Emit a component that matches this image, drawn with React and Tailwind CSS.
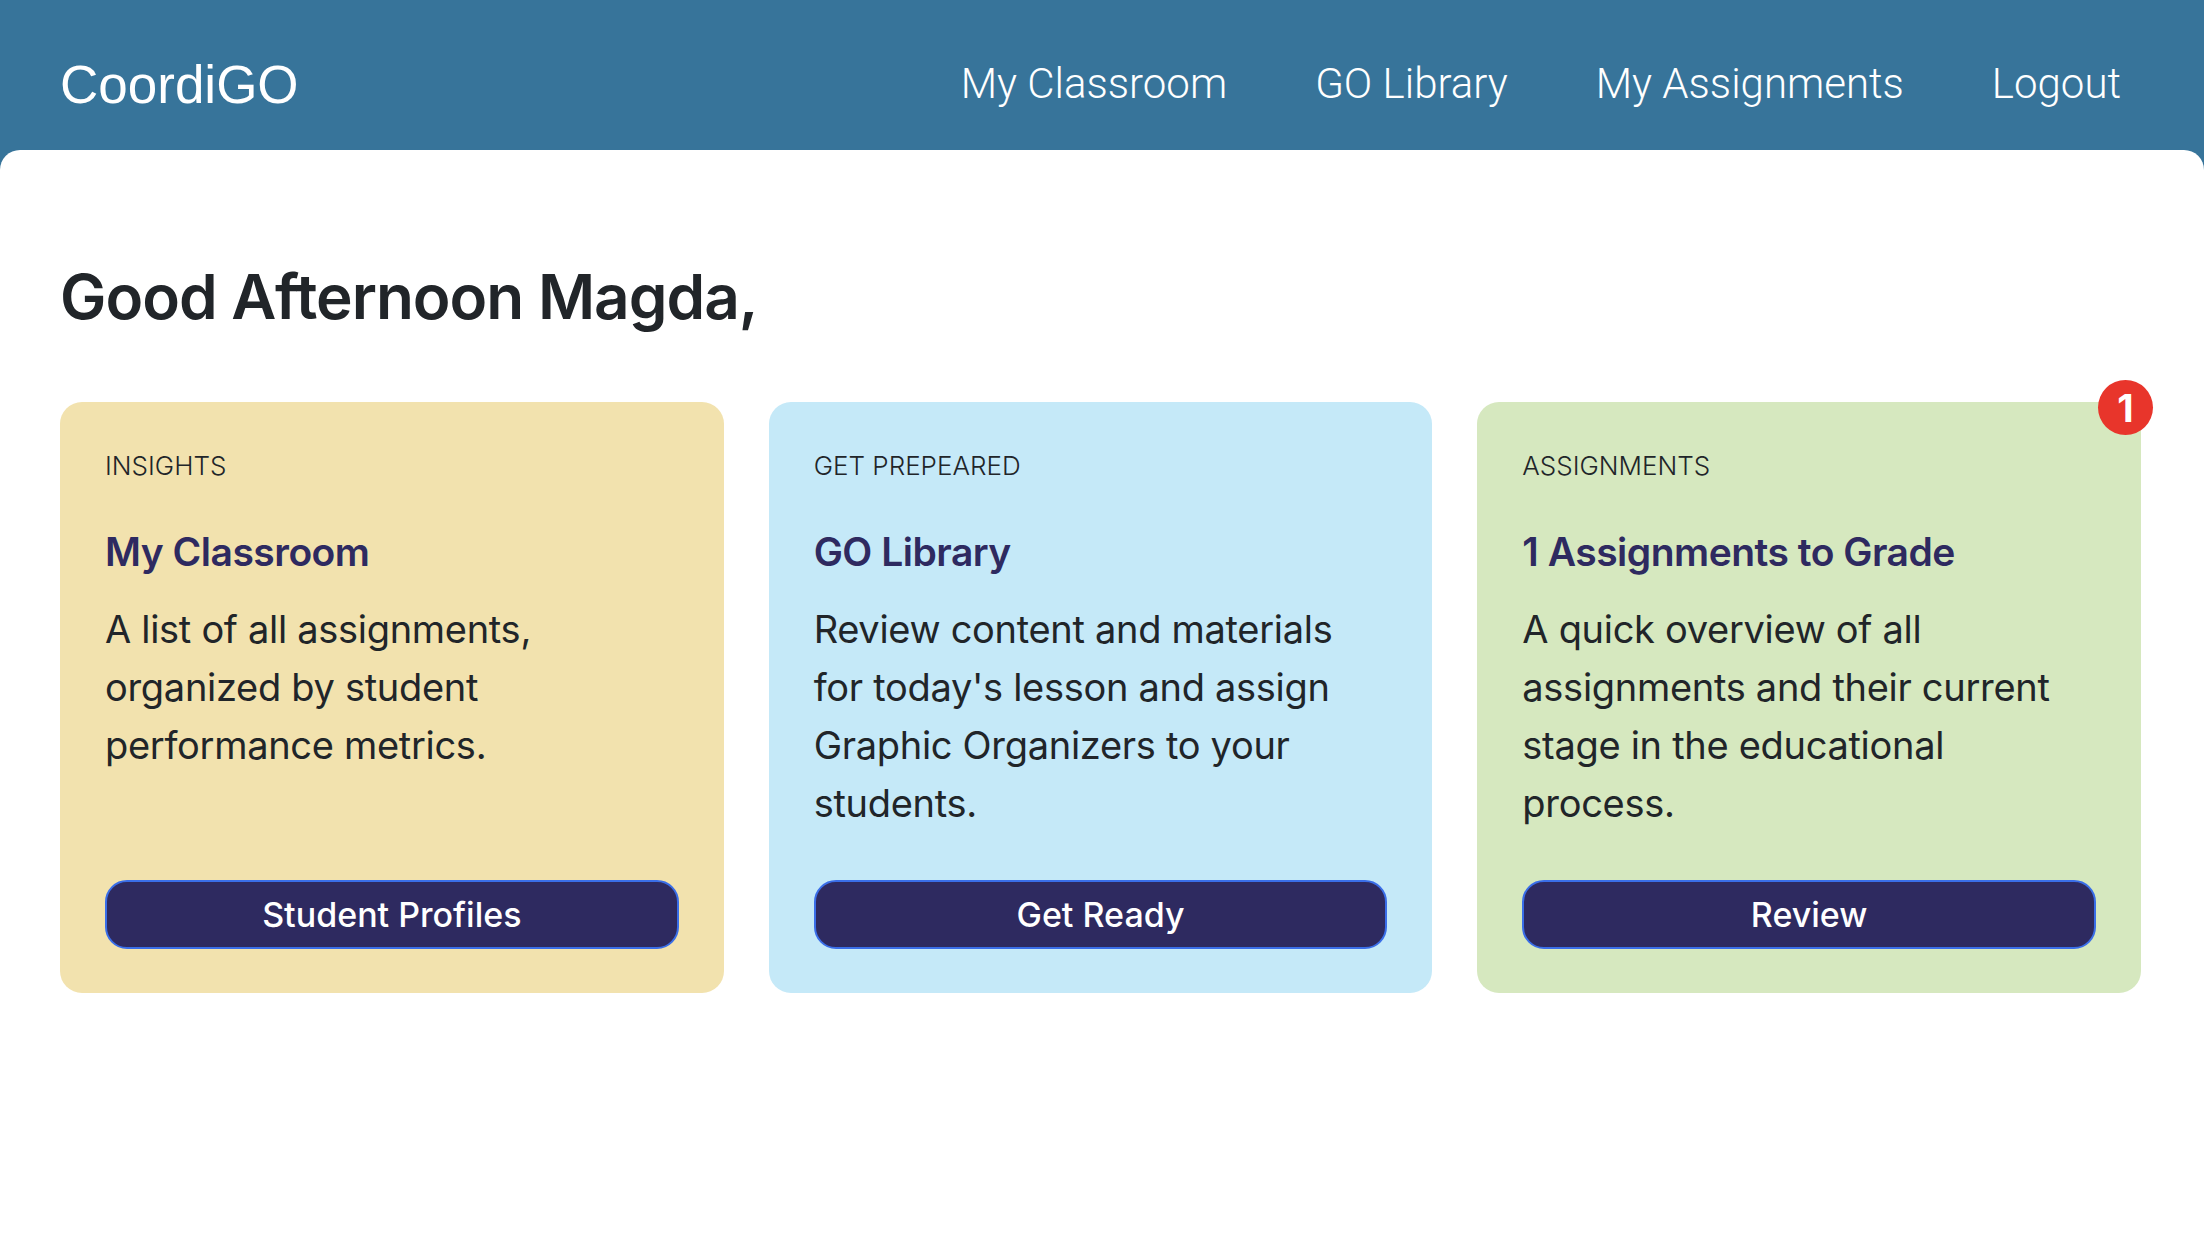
import React from "react";

const cards = [
  {
    label: "INSIGHTS",
    title: "My Classroom",
    text: "A list of all assignments, organized by student performance metrics.",
    button: "Student Profiles",
    bg: "bg-[#f2e2ae]",
  },
  {
    label: "GET PREPEARED",
    title: "GO Library",
    text: "Review content and materials for today's lesson and assign Graphic Organizers to your students.",
    button: "Get Ready",
    bg: "bg-[#c5e9f8]",
  },
  {
    label: "ASSIGNMENTS",
    title: "1 Assignments to Grade",
    text: "A quick overview of all assignments and their current stage in the educational process.",
    button: "Review",
    bg: "bg-[#d6e8bf]",
    badge: "1",
  },
];

export default function App() {
  return (
    <div className="min-h-screen bg-[#37749a] flex flex-col">
      <header className="h-[150px] shrink-0 flex items-center justify-between pl-[60px] pr-[83px] pt-[18px]">
        <div className="text-white text-[53px] leading-none font-['Liberation_Sans',Arial,sans-serif]">
          CoordiGO
        </div>
        <nav className="flex items-center gap-[88px] text-white text-[42px] leading-none font-light font-['Roboto',sans-serif]">
          <a>My Classroom</a>
          <a>GO Library</a>
          <a>My Assignments</a>
          <a>Logout</a>
        </nav>
      </header>
      <main className="flex-1 bg-white rounded-t-[20px] pl-[60px] pr-[63px] pt-[110px] pb-[60px] font-['Inter',sans-serif] text-[#212529]">
        <h1 className="text-[62px] leading-[1.2] font-semibold tracking-[-1px]">
          Good Afternoon Magda,
        </h1>
        <div className="mt-[68px] grid grid-cols-3 gap-[45px]">
          {cards.map((c) => (
            <div
              key={c.label}
              className={`relative ${c.bg} rounded-[22px] pt-[44px] pb-[44px] px-[45px] flex flex-col`}
            >
              {c.badge && (
                <div className="absolute -top-[22px] -right-[12px] w-[55px] h-[55px] rounded-full bg-[#e8352b] text-white flex items-center justify-center text-[38px] font-bold leading-none">
                  {c.badge}
                </div>
              )}
              <div className="text-[26px] leading-[39px] font-light text-[#212529]">
                {c.label}
              </div>
              <div className="mt-[43px] text-[39px] leading-[48px] font-semibold text-[#2e2a60] tracking-[-0.5px]">
                {c.title}
              </div>
              <p className="mt-[24px] mb-[48px] text-[38px] leading-[58px] tracking-[-0.3px] text-[#212529]">
                {c.text}
              </p>
              <button className="mt-auto w-full h-[69px] rounded-[22px] border-2 border-[#3a6ee8] bg-[#2e2a60] text-white text-[34px] font-medium">
                {c.button}
              </button>
            </div>
          ))}
        </div>
      </main>
    </div>
  );
}
